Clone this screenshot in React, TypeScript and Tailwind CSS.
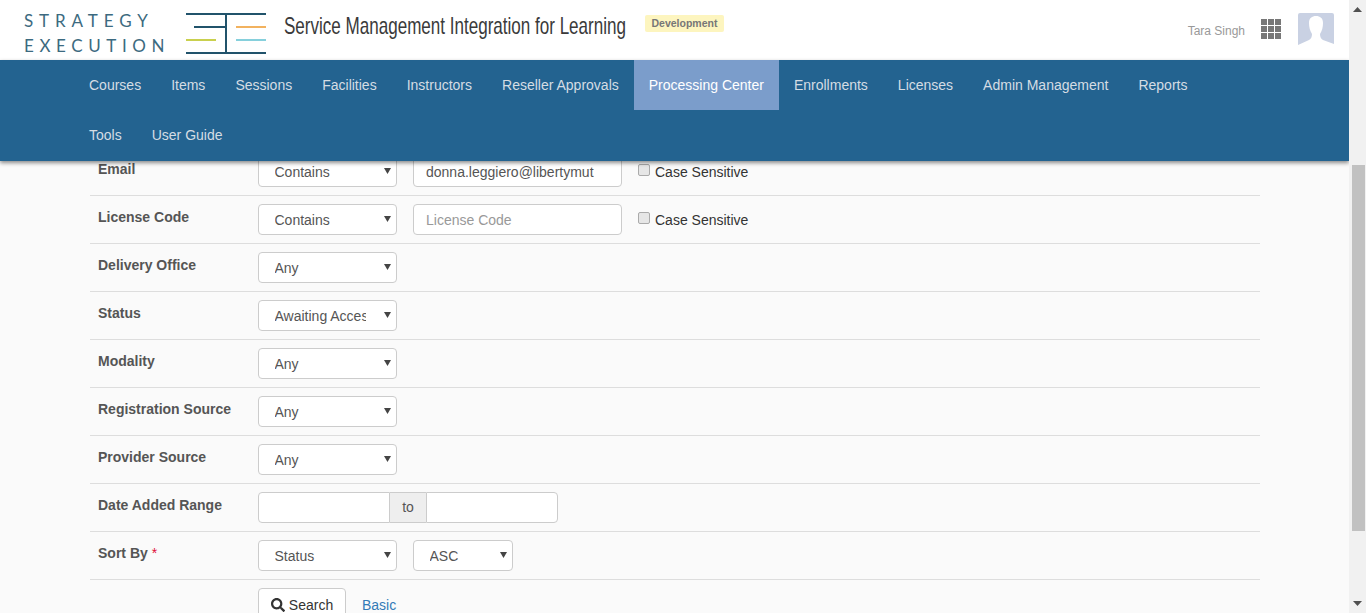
import { FaSearch } from "react-icons/fa";

const navItems = ["Courses", "Items", "Sessions", "Facilities", "Instructors", "Reseller Approvals", "Processing Center", "Enrollments", "Licenses", "Admin Management", "Reports", "Tools", "User Guide"];

function Logo() {
  return (
    <div className="flex items-start">
      <div className="ml-[24px] w-[162px] font-['Lato',sans-serif] text-[17px] leading-[25px] text-[#3c6a80]">
        <div className="tracking-[5.9px]">STRATEGY</div>
        <div className="tracking-[5.6px]">EXECUTION</div>
      </div>
      <svg width="80" height="42" viewBox="0 0 80 42" className="mt-[4px]">
        <path d="M0 2H80M40 2V41M0 41H80M8 15H40" stroke="#21536b" strokeWidth="2" fill="none" />
        <path d="M50 15H80" stroke="#f2b25f" strokeWidth="2" />
        <path d="M0 28H30" stroke="#c9d04e" strokeWidth="2" />
        <path d="M50 28H80" stroke="#86d0dc" strokeWidth="2" />
      </svg>
    </div>
  );
}

function Select({ value, width = "w-[139px]" }: { value: string; width?: string }) {
  return (
    <div className={`relative h-[31px] ${width}`}>
      <select
        defaultValue={value}
        className="h-full w-full appearance-none rounded-[4px] border border-[#ccc] bg-white pl-[15.5px] pr-[30px] pt-[2px] text-[14px] text-[#555] outline-none"
      >
        <option>{value}</option>
      </select>
      <svg width="7" height="6" viewBox="0 0 7 6" className="pointer-events-none absolute right-[6px] top-[12px]">
        <path d="M0 0H7L3.5 6Z" fill="#444" />
      </svg>
    </div>
  );
}

function TextInput({ value, placeholder }: { value?: string; placeholder?: string }) {
  return (
    <input
      defaultValue={value}
      placeholder={placeholder}
      className="h-[31px] w-[209px] rounded-[4px] border border-[#ccc] bg-white px-[12px] text-[14px] text-[#555] outline-none placeholder:text-[#999]"
    />
  );
}

function CaseSensitive() {
  return (
    <label className="flex h-[33px] items-center text-[14px] text-[#333]">
      <input type="checkbox" className="mb-[5px] h-[12px] w-[12px] appearance-none rounded-[2px] border border-[#aaa] bg-[#e6e6e6]" />
      <span className="ml-[5px]">Case Sensitive</span>
    </label>
  );
}

function Row({ label, required, children }: { label: string; required?: boolean; children: React.ReactNode }) {
  return (
    <div className="flex h-[48px] border-b border-[#ddd] pt-[8px]">
      <div className="w-[168px] pl-[8px] pt-[3px] text-[14px] font-bold text-[#555]">
        {label}
        {required && <span className="font-normal text-[#e0103a]"> *</span>}
      </div>
      <div className="flex items-start gap-[16px]">{children}</div>
    </div>
  );
}

export default function App() {
  return (
    <div className="flex h-screen overflow-hidden bg-[#fafafa] font-['Liberation_Sans',Arial,sans-serif]">
      <div className="flex min-w-0 flex-1 flex-col">
        <header className="flex h-[60px] shrink-0 items-start bg-white">
          <div className="mt-[8px]">
            <Logo />
          </div>
          <div className="ml-[18px] mt-[11px] w-[343px] whitespace-nowrap">
            <div className="origin-left scale-x-[0.71] text-[24px] leading-[30px] text-[#3a3a3a]">
              Service Management Integration for Learning
            </div>
          </div>
          <span className="ml-[18px] mt-[15px] rounded-[2px] bg-[#fdf5bf] px-[6.5px] py-[2px] text-[10.5px] font-bold leading-[13px] text-[#777]">
            Development
          </span>
          <div className="ml-auto flex items-start">
            <span className="mt-[24px] text-[12px] leading-[14px] text-[#999]">Tara Singh</span>
            <div className="ml-[16px] mt-[19px] grid grid-cols-3 gap-[1px]">
              {Array.from({ length: 9 }).map((_, i) => (
                <div key={i} className="h-[6px] w-[6px] bg-[#777]" />
              ))}
            </div>
            <svg width="36" height="32" viewBox="0 0 36 32" className="ml-[17px] mr-[15px] mt-[13px]">
              <path d="M2 0H34Q36 0 36 2V32H0V2Q0 0 2 0Z" fill="#c9d1e3" />
              <path d="M0 32L11 27C13 26 14 24 14 21C12 18 11 14 11 10C11 5 14 3 18 3C22 3 25 5 25 10C25 14 24 18 22 21C22 24 23 26 25 27L36 31V32Z" fill="#fff" />
            </svg>
          </div>
        </header>

        <nav className="relative z-10 h-[101px] shrink-0 bg-[#236390] shadow-[0_2px_4px_rgba(0,0,0,0.45)]">
          <ul className="ml-[74px] flex w-[1170px] flex-wrap">
            {navItems.map((item) => (
              <li
                key={item}
                className={`flex h-[50px] items-center px-[15px] text-[14px] ${
                  item === "Processing Center" ? "bg-[#7b9dcb] text-white" : "text-[#d5dde4]"
                }`}
              >
                {item}
              </li>
            ))}
          </ul>
        </nav>

        <main className="-mt-[13px] ml-[90px] w-[1170px]">
          <Row label="Email">
            <Select value="Contains" />
            <TextInput value="donna.leggiero@libertymut" />
            <CaseSensitive />
          </Row>
          <Row label="License Code">
            <Select value="Contains" />
            <TextInput placeholder="License Code" />
            <CaseSensitive />
          </Row>
          <Row label="Delivery Office">
            <Select value="Any" />
          </Row>
          <Row label="Status">
            <Select value="Awaiting Access" />
          </Row>
          <Row label="Modality">
            <Select value="Any" />
          </Row>
          <Row label="Registration Source">
            <Select value="Any" />
          </Row>
          <Row label="Provider Source">
            <Select value="Any" />
          </Row>
          <Row label="Date Added Range">
            <div className="flex h-[31px] w-[300px]">
              <input className="w-[132px] rounded-l-[4px] border border-[#ccc] bg-white outline-none" />
              <span className="flex w-[36px] items-center justify-center border-y border-[#ccc] bg-[#eee] text-[14px] text-[#555]">to</span>
              <input className="w-[132px] rounded-r-[4px] border border-[#ccc] bg-white outline-none" />
            </div>
          </Row>
          <Row label="Sort By" required>
            <Select value="Status" />
            <Select value="ASC" width="w-[100px]" />
          </Row>
          <div className="flex items-center gap-[16px] pl-[168px] pt-[8px]">
            <button className="flex h-[34px] w-[88px] items-center justify-center gap-[4px] rounded-[4px] border border-[#ccc] bg-white text-[14px] text-[#333]">
              <FaSearch className="h-[14px] w-[14px]" />
              Search
            </button>
            <a className="text-[14px] text-[#337ab7]">Basic</a>
          </div>
        </main>
      </div>

      <div className="relative z-20 flex w-[17px] shrink-0 flex-col items-center bg-[#f1f1f1]">
        <svg width="9" height="5" viewBox="0 0 9 5" className="mt-[7px]">
          <path d="M0 5H9L4.5 0Z" fill="#505050" />
        </svg>
        <div className="ml-[1px] mt-[153px] h-[366px] w-[13px] bg-[#c1c1c1]" />
        <svg width="9" height="5" viewBox="0 0 9 5" className="mt-auto mb-[7px]">
          <path d="M0 0H9L4.5 5Z" fill="#505050" />
        </svg>
      </div>
    </div>
  );
}
